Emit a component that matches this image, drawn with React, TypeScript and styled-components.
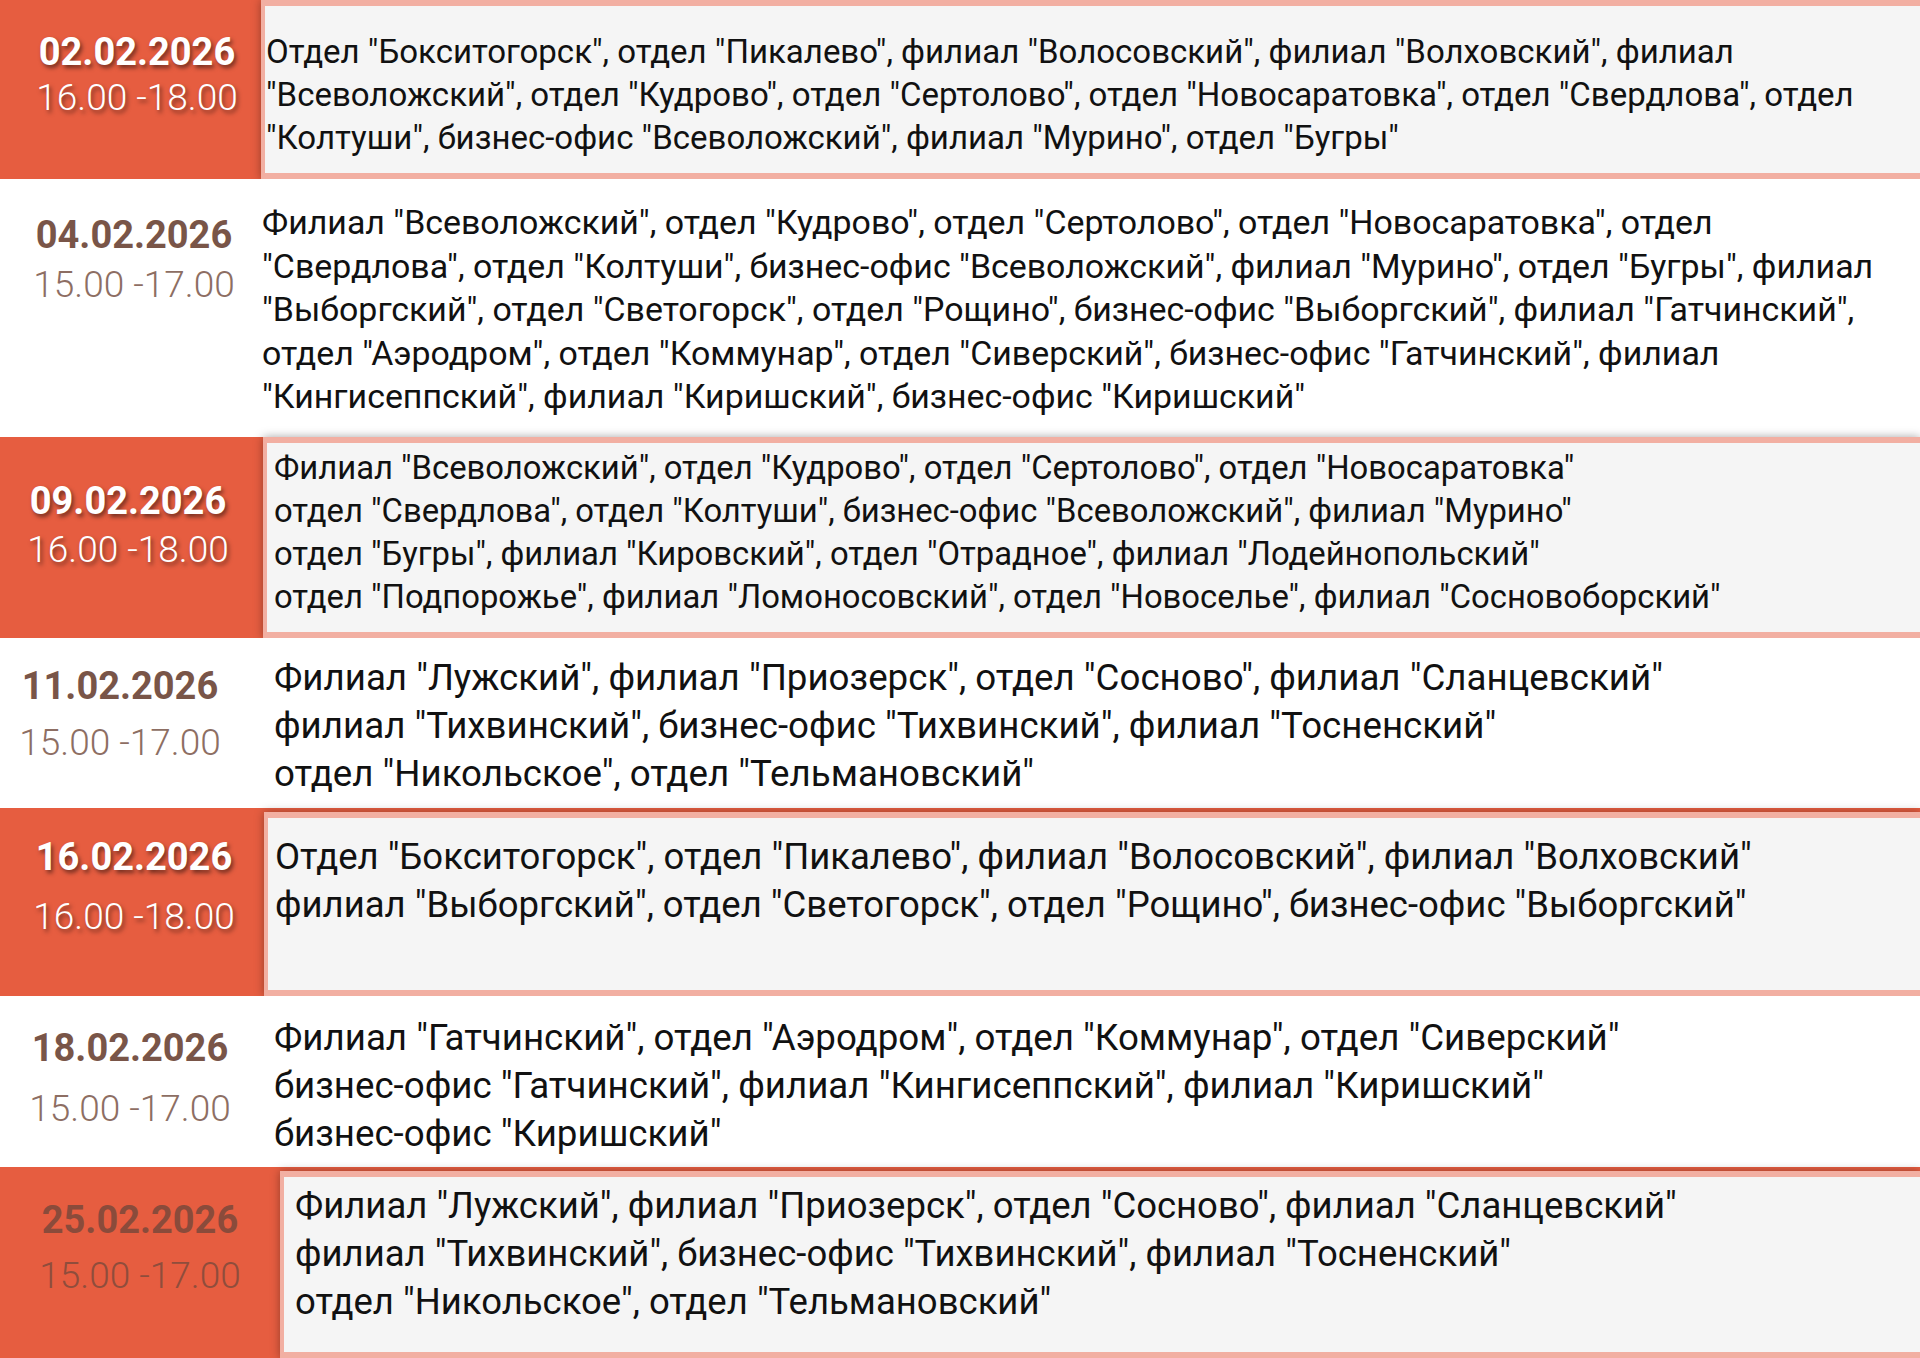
import React from "react";
import styled, { createGlobalStyle, css } from "styled-components";

const GlobalStyle = createGlobalStyle`
  html, body {
    margin: 0;
    padding: 0;
    background: #ffffff;
    overflow: hidden;
  }
  body {
    font-family: Roboto, "Liberation Sans", sans-serif;
  }
`;

type Tone = "accent" | "plain" | "muted";

const RED = "#e65d40";

const Schedule = styled.div`
  width: 1920px;
  height: 1358px;
  display: flex;
  flex-direction: column;
  overflow: hidden;
`;

const Row = styled.div<{ $height: number; $side: number; $tone: Tone }>`
  display: grid;
  grid-template-columns: ${(p) => p.$side}px 1fr;
  height: ${(p) => p.$height}px;
  flex: none;
  background: ${(p) => (p.$tone === "plain" ? "#ffffff" : RED)};
`;

const Side = styled.div<{ $top: number; $shift: number }>`
  display: flex;
  flex-direction: column;
  align-items: center;
  padding-top: ${(p) => p.$top}px;
  padding-left: ${(p) => Math.max(0, p.$shift * 2)}px;
  padding-right: ${(p) => Math.max(0, -p.$shift * 2)}px;
`;

const DateText = styled.div<{ $tone: Tone }>`
  font-size: 38px;
  line-height: 38px;
  font-weight: 700;
  white-space: nowrap;
  color: ${(p) =>
    p.$tone === "accent" ? "#ffffff" : p.$tone === "muted" ? "#8a4b3b" : "#795548"};
  ${(p) =>
    p.$tone === "accent" &&
    css`
      text-shadow: 2px 3px 4px rgba(0, 0, 0, 0.5);
    `}
`;

const TimeText = styled.div<{ $tone: Tone; $gap: number }>`
  margin-top: ${(p) => p.$gap}px;
  font-size: 37px;
  line-height: 36px;
  font-weight: 300;
  white-space: nowrap;
  color: ${(p) =>
    p.$tone === "accent" ? "#ffffff" : p.$tone === "muted" ? "#8f4d3c" : "#8d6e63"};
  ${(p) =>
    p.$tone === "accent" &&
    css`
      text-shadow: 2px 3px 4px rgba(0, 0, 0, 0.5);
    `}
`;

const Panel = styled.div<{ $offset: number }>`
  margin-top: ${(p) => p.$offset}px;
  background: #f5f5f5;
  border: 6px solid #f2afa2;
  border-left-width: 4px;
  border-right: none;
  box-shadow: 0 0 9px rgba(0, 0, 0, 0.35);
  min-width: 0;
`;

const Plain = styled.div`
  min-width: 0;
`;

const Lines = styled.div<{ $size: number; $lead: number; $top: number; $left: number }>`
  padding-top: ${(p) => p.$top}px;
  padding-left: ${(p) => p.$left}px;
  font-size: ${(p) => p.$size}px;
  line-height: ${(p) => p.$lead}px;
  color: #111111;
  white-space: nowrap;
`;

type Entry = {
  tone: Tone;
  boxed: boolean;
  height: number;
  side: number;
  date: string;
  time: string;
  dateY: number;
  timeY: number;
  cx: number;
  size: number;
  lead: number;
  textY: number;
  textX: number;
  offset: number;
  lines: string[];
};

const rows: Entry[] = [
  {
    tone: "accent",
    boxed: true,
    height: 179,
    side: 261,
    date: "02.02.2026",
    time: "16.00 -18.00",
    dateY: 52,
    timeY: 98,
    cx: 137,
    size: 33,
    lead: 43,
    textY: 24,
    textX: 1,
    offset: 0,
    lines: [
      'Отдел "Бокситогорск", отдел "Пикалево", филиал "Волосовский", филиал "Волховский", филиал',
      '"Всеволожский", отдел "Кудрово", отдел "Сертолово", отдел "Новосаратовка", отдел "Свердлова", отдел',
      '"Колтуши", бизнес-офис "Всеволожский", филиал "Мурино", отдел "Бугры"',
    ],
  },
  {
    tone: "plain",
    boxed: false,
    height: 258,
    side: 261,
    date: "04.02.2026",
    time: "15.00 -17.00",
    dateY: 56,
    timeY: 106,
    cx: 134,
    size: 33.9,
    lead: 43.5,
    textY: 22,
    textX: 1,
    offset: 0,
    lines: [
      'Филиал "Всеволожский", отдел "Кудрово", отдел "Сертолово", отдел "Новосаратовка", отдел',
      '"Свердлова", отдел "Колтуши", бизнес-офис "Всеволожский", филиал "Мурино", отдел "Бугры", филиал',
      '"Выборгский", отдел "Светогорск", отдел "Рощино", бизнес-офис "Выборгский", филиал "Гатчинский",',
      'отдел "Аэродром", отдел "Коммунар", отдел "Сиверский", бизнес-офис "Гатчинский", филиал',
      '"Кингисеппский", филиал "Киришский", бизнес-офис "Киришский"',
    ],
  },
  {
    tone: "accent",
    boxed: true,
    height: 201,
    side: 263,
    date: "09.02.2026",
    time: "16.00 -18.00",
    dateY: 64,
    timeY: 113,
    cx: 128,
    size: 32.8,
    lead: 43,
    textY: 4,
    textX: 7,
    offset: 0,
    lines: [
      'Филиал "Всеволожский", отдел "Кудрово", отдел "Сертолово", отдел "Новосаратовка"',
      'отдел "Свердлова", отдел "Колтуши", бизнес-офис "Всеволожский", филиал "Мурино"',
      'отдел "Бугры", филиал "Кировский", отдел "Отрадное", филиал "Лодейнопольский"',
      'отдел "Подпорожье", филиал "Ломоносовский", отдел "Новоселье", филиал "Сосновоборский"',
    ],
  },
  {
    tone: "plain",
    boxed: false,
    height: 170,
    side: 261,
    date: "11.02.2026",
    time: "15.00 -17.00",
    dateY: 48,
    timeY: 105,
    cx: 120,
    size: 36.7,
    lead: 48,
    textY: 16,
    textX: 13,
    offset: 0,
    lines: [
      'Филиал "Лужский", филиал "Приозерск", отдел "Сосново", филиал "Сланцевский"',
      'филиал "Тихвинский", бизнес-офис "Тихвинский", филиал "Тосненский"',
      'отдел "Никольское", отдел "Тельмановский"',
    ],
  },
  {
    tone: "accent",
    boxed: true,
    height: 188,
    side: 264,
    date: "16.02.2026",
    time: "16.00 -18.00",
    dateY: 49,
    timeY: 109,
    cx: 134,
    size: 36.5,
    lead: 48,
    textY: 15,
    textX: 7,
    offset: 4,
    lines: [
      'Отдел "Бокситогорск", отдел "Пикалево", филиал "Волосовский", филиал "Волховский"',
      'филиал "Выборгский", отдел "Светогорск", отдел "Рощино", бизнес-офис "Выборгский"',
    ],
  },
  {
    tone: "plain",
    boxed: false,
    height: 171,
    side: 261,
    date: "18.02.2026",
    time: "15.00 -17.00",
    dateY: 52,
    timeY: 113,
    cx: 130,
    size: 36.7,
    lead: 48,
    textY: 18,
    textX: 13,
    offset: 0,
    lines: [
      'Филиал "Гатчинский", отдел "Аэродром", отдел "Коммунар", отдел "Сиверский"',
      'бизнес-офис "Гатчинский", филиал "Кингисеппский", филиал "Киришский"',
      'бизнес-офис "Киришский"',
    ],
  },
  {
    tone: "muted",
    boxed: true,
    height: 191,
    side: 280,
    date: "25.02.2026",
    time: "15.00 -17.00",
    dateY: 53,
    timeY: 109,
    cx: 140,
    size: 36.5,
    lead: 48,
    textY: 5,
    textX: 11,
    offset: 4,
    lines: [
      'Филиал "Лужский", филиал "Приозерск", отдел "Сосново", филиал "Сланцевский"',
      'филиал "Тихвинский", бизнес-офис "Тихвинский", филиал "Тосненский"',
      'отдел "Никольское", отдел "Тельмановский"',
    ],
  },
];

function ScheduleRow({ row }: { row: Entry }) {
  const body = (
    <Lines $size={row.size} $lead={row.lead} $top={row.textY} $left={row.textX}>
      {row.lines.map((line, i) => (
        <div key={i}>{line}</div>
      ))}
    </Lines>
  );

  return (
    <Row $height={row.height} $side={row.side} $tone={row.tone}>
      <Side $top={row.dateY - 19} $shift={row.cx - row.side / 2}>
        <DateText $tone={row.tone}>{row.date}</DateText>
        <TimeText $tone={row.tone} $gap={row.timeY - 18 - (row.dateY + 19)}>
          {row.time}
        </TimeText>
      </Side>
      {row.boxed ? <Panel $offset={row.offset}>{body}</Panel> : <Plain>{body}</Plain>}
    </Row>
  );
}

export default function App() {
  return (
    <>
      <GlobalStyle />
      <Schedule>
        {rows.map((row) => (
          <ScheduleRow key={row.date} row={row} />
        ))}
      </Schedule>
    </>
  );
}
